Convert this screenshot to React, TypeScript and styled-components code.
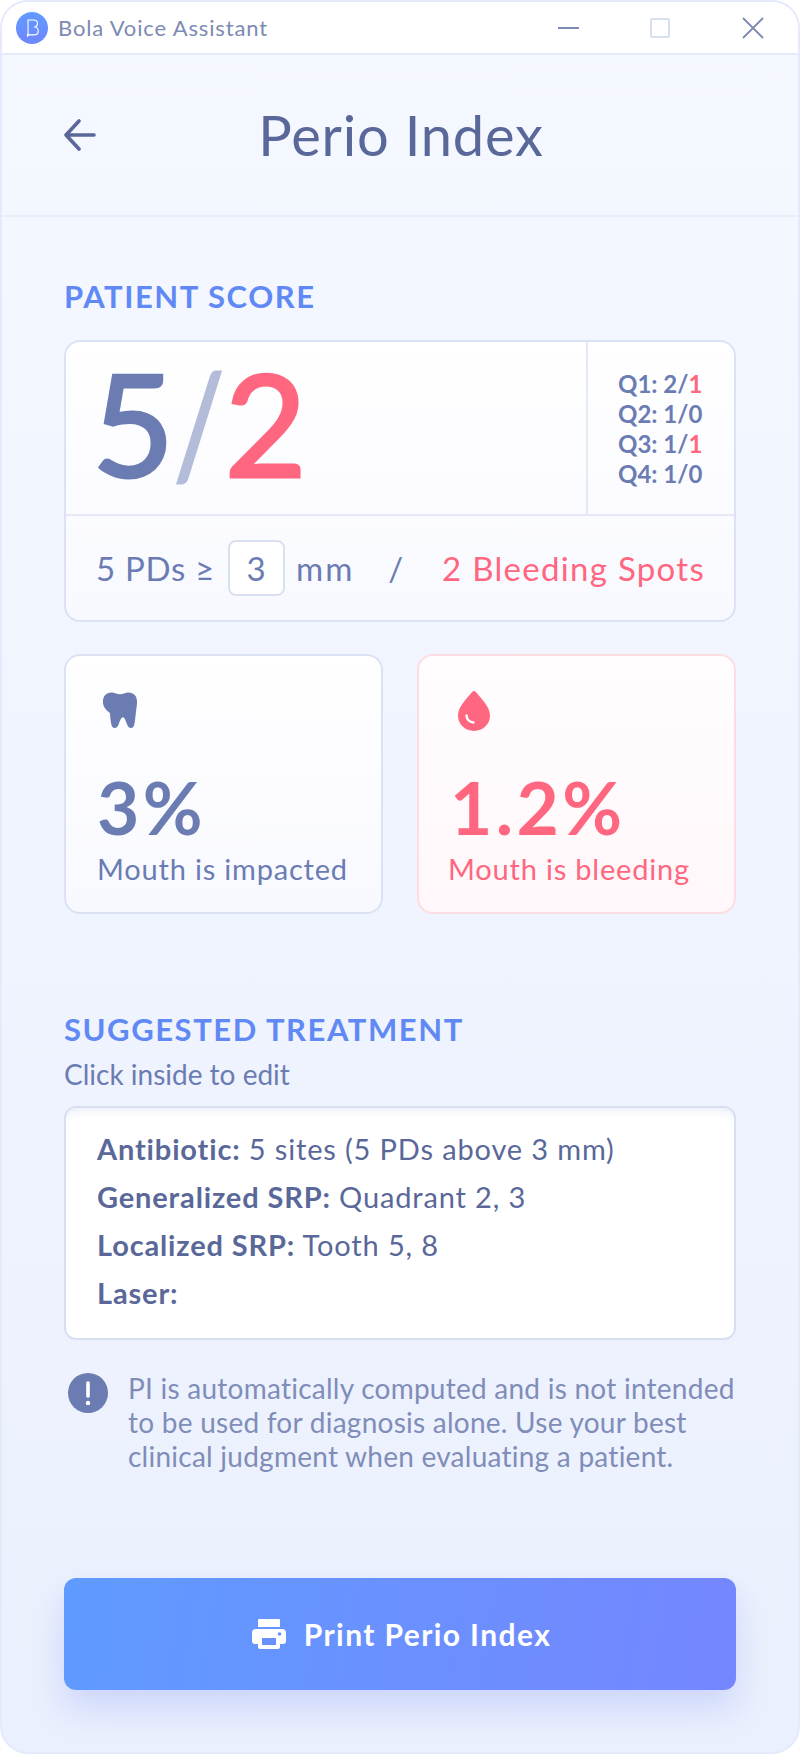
import React from "react";
import styled, { createGlobalStyle } from "styled-components";

const Global = createGlobalStyle`
  html, body { margin: 0; padding: 0; background: #fff; }
  * { box-sizing: border-box; }
  body { font-family: Lato, "Open Sans", sans-serif; }
`;

const ink = "#5a6899";
const slate = "#6b7cb3";
const red = "#ff6680";
const blue = "#6089f5";

const Window = styled.div`
  width: 800px;
  height: 1754px;
  border: 2px solid #e4eafb;
  border-radius: 28px;
  overflow: hidden;
  background: linear-gradient(180deg, #f5f8ff 0%, #ebf0fe 100%);
  display: flex;
  flex-direction: column;
`;
const TitleBar = styled.div`
  height: 53px;
  flex: none;
  background: #fff;
  border-bottom: 2px solid #e4eafb;
  display: flex;
  align-items: center;
  padding: 0 34px 0 14px;
`;
const AppName = styled.span`
  font-size: 22px;
  color: #7d8ab3;
  margin-left: 10px;
  flex: 1;
  letter-spacing: 0.85px;
`;
const WinControls = styled.div`
  display: flex;
  align-items: center;
`;
const MinimizeIcon = styled.svg`
  margin-right: 71px;
`;
const MaximizeIcon = styled.svg`
  margin-right: 72px;
`;
const Header = styled.div`
  height: 162px;
  flex: none;
  border-bottom: 2px solid #e9eefb;
  padding: 0 62px;
  display: flex;
  align-items: center;
`;
const Title = styled.h1`
  flex: 1;
  margin: 0;
  font-size: 56px;
  font-weight: 400;
  color: ${ink};
  text-align: center;
  padding-right: 30px;
  letter-spacing: 0.8px;
  line-height: 64px;
`;
const Body = styled.div`
  flex: 1;
  padding: 0 62px;
  display: flex;
  flex-direction: column;
`;
const SectionLabel = styled.div<{ $top: number }>`
  margin-top: ${(p) => p.$top}px;
  font-size: 31px;
  line-height: 36px;
  font-weight: 700;
  color: ${blue};
  letter-spacing: 1.55px;
`;
const ScoreCard = styled.div`
  margin-top: 26px;
  height: 282px;
  border: 2px solid #dbe2f3;
  border-radius: 16px;
  background: linear-gradient(180deg, #ffffff 0%, #f8f9ff 100%);
  display: flex;
  flex-direction: column;
`;
const ScoreTop = styled.div`
  height: 174px;
  flex: none;
  border-bottom: 2px solid #e4e9f8;
  display: flex;
`;
const BigScore = styled.div`
  flex: 1;
  padding-left: 26px;
  font-size: 142px;
  line-height: 160px;
  font-weight: 400;
  color: ${slate};
  -webkit-text-stroke: 3px currentColor;
  display: flex;
`;
const BigSlash = styled.span`
  color: #b3bdd9;
  margin: 0 -7px 0 -7px;
  transform: scaleX(0.78);
`;
const BigBleed = styled.span`
  color: ${red};
`;
const Quadrants = styled.div`
  width: 148px;
  flex: none;
  border-left: 2px solid #e4e9f8;
  padding: 27px 0 0 30px;
  font-size: 24px;
  line-height: 30px;
  font-weight: 700;
  color: ${slate};
`;
const Bleed = styled.span`
  color: ${red};
`;
const ScoreBottom = styled.div`
  flex: 1;
  padding: 0 29px 0 30px;
  display: flex;
  align-items: center;
  font-size: 33px;
  letter-spacing: 0.7px;
  color: ${slate};
`;
const DepthBox = styled.span`
  width: 57px;
  height: 56px;
  margin: 0 11px 0 13px;
  border: 2px solid #d9e0f1;
  border-radius: 8px;
  background: #fff;
  display: inline-flex;
  align-items: center;
  justify-content: center;
`;
const Unit = styled.span`
  letter-spacing: 2px;
`;
const Separator = styled.span`
  margin-left: 34px;
`;
const BleedText = styled.span`
  margin-left: auto;
  color: ${red};
  letter-spacing: 1.3px;
`;
const StatRow = styled.div`
  margin-top: 32px;
  display: grid;
  grid-template-columns: 319px 319px;
  justify-content: space-between;
`;
const StatCard = styled.div<{ $danger?: boolean }>`
  height: 260px;
  border: 2px solid ${(p) => (p.$danger ? "#ffdbe2" : "#dbe2f3")};
  border-radius: 16px;
  background: ${(p) =>
    p.$danger
      ? "linear-gradient(180deg, #fffdfe 0%, #fff7f9 100%)"
      : "linear-gradient(180deg, #ffffff 0%, #f8f9ff 100%)"};
  padding: 34px 0 0 31px;
  color: ${(p) => (p.$danger ? red : slate)};
  display: flex;
  flex-direction: column;
`;
const ToothIcon = styled.svg`
  display: block;
  flex: none;
  margin: 1px 0 3px 5px;
`;
const DropIcon = styled.svg`
  display: block;
  flex: none;
  margin: 0 0 0 7px;
`;
const StatValue = styled.div`
  margin-top: 39px;
  font-size: 73px;
  line-height: 72px;
  font-weight: 700;
  letter-spacing: 3.400px;
`;
const StatLabel = styled.div<{ $danger?: boolean }>`
  margin: 8px 0 0 ${(p) => (p.$danger ? -2 : 0)}px;
  font-size: 29px;
  line-height: 36px;
  letter-spacing: 0.8px;
`;
const Hint = styled.div`
  margin-top: 10px;
  font-size: 28px;
  line-height: 34px;
  color: ${slate};
`;
const Notes = styled.div`
  margin-top: 15px;
  height: 234px;
  border: 2px solid #d8dff0;
  border-radius: 12px;
  background: #fff;
  box-shadow: inset 0 8px 8px -6px rgba(120, 140, 200, 0.18);
  padding: 17px 29px 0 31px;
  font-size: 29px;
  line-height: 48px;
  color: ${ink};
  letter-spacing: 0.85px;
`;
const NoteLine = styled.div``;
const Alert = styled.div`
  margin-top: 31px;
  display: flex;
  gap: 20px;
  padding-left: 4px;
`;
const AlertIcon = styled.svg`
  flex: none;
  margin-top: 2px;
`;
const AlertText = styled.div`
  font-size: 28px;
  line-height: 34px;
  color: #7f8db8;
  letter-spacing: 0.25px;
`;
const PrintButton = styled.button`
  margin-top: auto;
  margin-bottom: 62px;
  width: 672px;
  height: 112px;
  border: none;
  border-radius: 12px;
  background: linear-gradient(100deg, #5f9bff 0%, #7586ff 100%);
  box-shadow: 0 18px 34px rgba(90, 120, 230, 0.22);
  color: #fff;
  font: 700 30px Lato, sans-serif;
  letter-spacing: 1.4px;
  display: flex;
  align-items: center;
  justify-content: center;
  gap: 18px;
  padding: 0 0 0 3px;
`;

const Tooth = () => (
  <ToothIcon width="36" height="38" viewBox="0 0 38 38" preserveAspectRatio="none">
    <path
      fill="currentColor"
      d="M10 1.500c3.600 0 5.800 1.800 9 1.800s5.400-1.800 9-1.800c5.600 0 9 3.600 9 9.200 0 3-.7 6.400-1.300 11.300-.5 4.600-.9 9-1.700 12-.6 2-1.700 3-3.400 3-2 0-3.100-1.300-4-3.300-1.300-3-2.700-7.400-4.600-7.400s-3.300 4.400-4.600 7.400c-.9 2-2 3.300-4 3.300-1.700 0-2.800-1-3.400-3-.8-3-1.200-7.400-1.700-12C1.700 17.100 1 13.700 1 10.700 1 5.100 4.400 1.500 10 1.500z"
    />
  </ToothIcon>
);
const Drop = () => (
  <DropIcon width="34" height="42" viewBox="0 0 34 42">
    <path
      fill="currentColor"
      d="M17 1c1 0 1.800.8 2.800 2.100C24 8.500 33 17 33 25.600 33 34.600 25.800 41 17 41S1 34.600 1 25.600C1 17 10 8.500 14.200 3.100 15.200 1.800 16 1 17 1z"
    />
    <path
      fill="none"
      stroke="#fff"
      strokeWidth="2.400"
      strokeLinecap="round"
      d="M9.500 25.500c.4 4 2.800 6.600 7 7"
    />
  </DropIcon>
);
const Printer = () => (
  <svg width="34" height="30" viewBox="0 0 34 30">
    <path
      fill="#fff"
      d="M7 0h20a1 1 0 0 1 1 1v7H6V1a1 1 0 0 1 1-1zM4 10h26a4 4 0 0 1 4 4v8a3 3 0 0 1-3 3h-3v3a2 2 0 0 1-2 2H8a2 2 0 0 1-2-2v-3H3a3 3 0 0 1-3-3v-8a4 4 0 0 1 4-4z"
    />
    <path fill="#6a90ff" d="M10 19h14v7H10z" />
    <circle cx="27.500" cy="15" r="1.800" fill="#6a90ff" />
  </svg>
);

export default function App() {
  return (
    <>
      <Global />
      <Window>
        <TitleBar>
          <svg width="32" height="32" viewBox="0 0 32 32">
            <defs>
              <linearGradient id="logo" x1="0" y1="0" x2="0" y2="1">
                <stop offset="0" stopColor="#5f9bff" />
                <stop offset="1" stopColor="#6f86ff" />
              </linearGradient>
            </defs>
            <circle cx="16" cy="16" r="16" fill="url(#logo)" />
            <path
              fill="none"
              stroke="#fff"
              strokeWidth="1.100"
              strokeLinejoin="round"
              d="M12 8h5.500c2.600 0 4 1.500 4 3.500 0 1.900-1.300 3.200-3 3.500 2.300.3 3.700 1.800 3.700 3.900 0 2.400-1.800 4-4.400 4H12.500l-1 1.600V22h.6z"
            />
          </svg>
          <AppName>Bola Voice Assistant</AppName>
          <WinControls>
            <MinimizeIcon width="21" height="4" viewBox="0 0 21 4">
              <path d="M0 2h21" stroke="#7d8ab3" strokeWidth="2" />
            </MinimizeIcon>
            <MaximizeIcon width="20" height="20" viewBox="0 0 20 20">
              <rect x="1" y="1" width="18" height="18" rx="1" fill="none" stroke="#d9e0f0" strokeWidth="2" />
            </MaximizeIcon>
            <svg width="22" height="22" viewBox="0 0 22 22">
              <path d="M1 1l20 20M21 1L1 21" stroke="#7d8ab3" strokeWidth="1.800" />
            </svg>
          </WinControls>
        </TitleBar>
        <Header>
          <svg width="32" height="32" viewBox="0 0 32 32">
            <path
              d="M30 16H2M15 2L2 16l13 14"
              fill="none"
              stroke={ink}
              strokeWidth="3.600"
              strokeLinecap="round"
              strokeLinejoin="round"
            />
          </svg>
          <Title>Perio Index</Title>
        </Header>
        <Body>
          <SectionLabel $top={61}>PATIENT SCORE</SectionLabel>
          <ScoreCard>
            <ScoreTop>
              <BigScore>
                5<BigSlash>/</BigSlash>
                <BigBleed>2</BigBleed>
              </BigScore>
              <Quadrants>
                <div>Q1: 2/<Bleed>1</Bleed></div>
                <div>Q2: 1/0</div>
                <div>Q3: 1/<Bleed>1</Bleed></div>
                <div>Q4: 1/0</div>
              </Quadrants>
            </ScoreTop>
            <ScoreBottom>
              5 PDs ≥<DepthBox>3</DepthBox><Unit>mm</Unit>
              <Separator>/</Separator>
              <BleedText>2 Bleeding Spots</BleedText>
            </ScoreBottom>
          </ScoreCard>
          <StatRow>
            <StatCard>
              <Tooth />
              <StatValue>3%</StatValue>
              <StatLabel>Mouth is impacted</StatLabel>
            </StatCard>
            <StatCard $danger>
              <Drop />
              <StatValue>1.2%</StatValue>
              <StatLabel $danger>Mouth is bleeding</StatLabel>
            </StatCard>
          </StatRow>
          <SectionLabel $top={97}>SUGGESTED TREATMENT</SectionLabel>
          <Hint>Click inside to edit</Hint>
          <Notes>
            <NoteLine><b>Antibiotic:</b> 5 sites (5 PDs above 3 mm)</NoteLine>
            <NoteLine><b>Generalized SRP:</b> Quadrant 2, 3</NoteLine>
            <NoteLine><b>Localized SRP:</b> Tooth 5, 8</NoteLine>
            <NoteLine><b>Laser:</b></NoteLine>
          </Notes>
          <Alert>
            <AlertIcon width="40" height="40" viewBox="0 0 40 40">
              <circle cx="20" cy="20" r="20" fill={slate} />
              <path d="M20 10v13" stroke="#fff" strokeWidth="3.600" strokeLinecap="round" />
              <circle cx="20" cy="30" r="2.200" fill="#fff" />
            </AlertIcon>
            <AlertText>
              PI is automatically computed and is not intended
              <br />
              to be used for diagnosis alone. Use your best
              <br />
              clinical judgment when evaluating a patient.
            </AlertText>
          </Alert>
          <PrintButton>
            <Printer />
            Print Perio Index
          </PrintButton>
        </Body>
      </Window>
    </>
  );
}
